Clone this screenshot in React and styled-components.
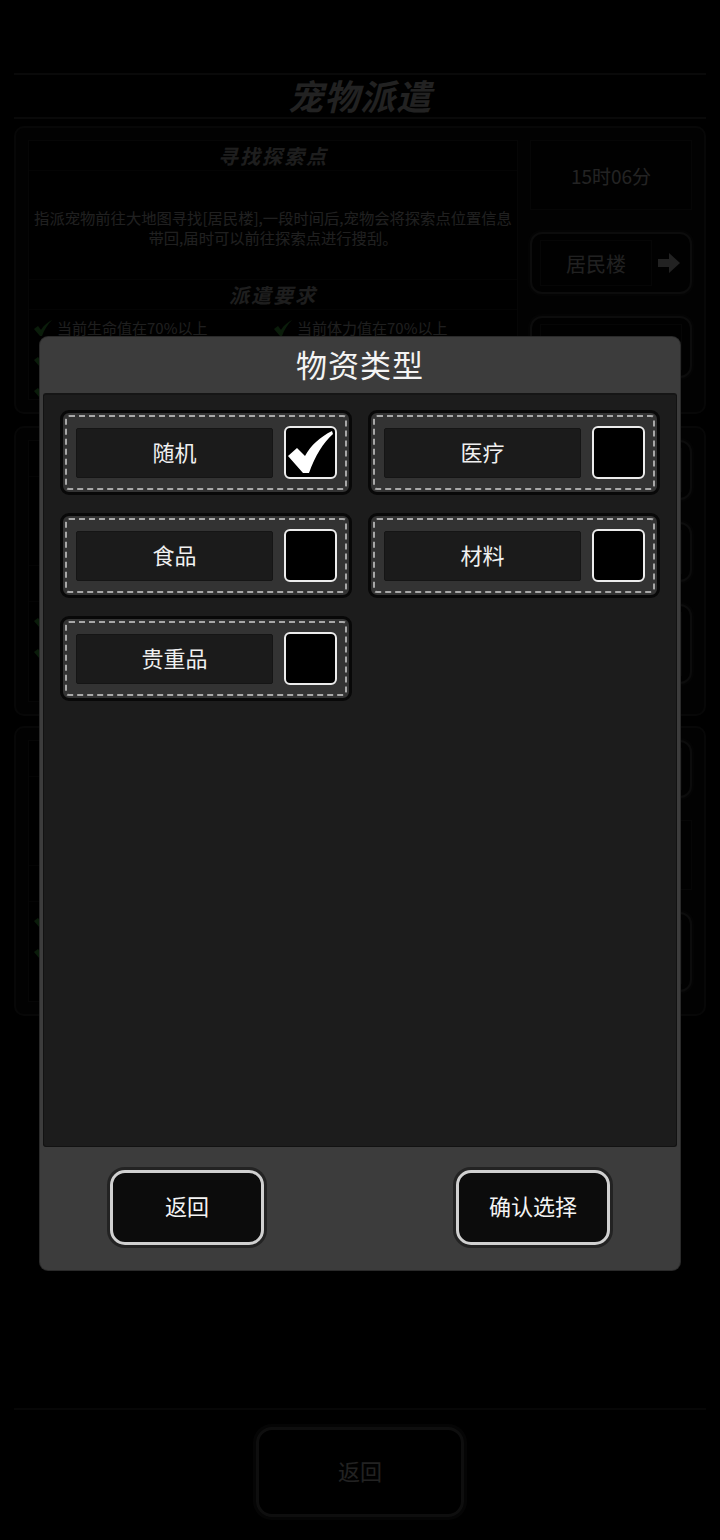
import React, { useState } from 'react';
import styled, { createGlobalStyle } from 'styled-components';

const GlobalStyle = createGlobalStyle`
    html, body {
        margin: 0;
        padding: 0;
        background: #000;
    }
    body {
        font-family: "Noto Sans CJK SC", "Noto Sans", sans-serif;
    }
    * { box-sizing: border-box; }
`;

const Screen = styled.div`
    position: relative;
    width: 720px;
    height: 1540px;
    overflow: hidden;
    background: #000;
`;

/* ---------- page behind the dialog ---------- */

const Page = styled.div`
    height: 100%;
    display: flex;
    flex-direction: column;
    padding-top: 73px;
`;

const TitleBar = styled.div`
    margin: 0 14px;
    height: 46px;
    border-top: 2px solid #3a3a3a;
    border-bottom: 2px solid #3a3a3a;
    display: flex;
    align-items: center;
    justify-content: center;
    padding-bottom: 3px;
    font-size: 35px;
    font-weight: 700;
    font-style: italic;
    color: #d0d0d0;
    letter-spacing: 1px;
`;

const Panel = styled.div`
    margin: ${p => p.$top}px 14px 0;
    height: ${p => p.$h}px;
    border: 2px solid #2c2c2c;
    border-radius: 10px;
    background: #0d0d0d;
    padding: 12px;
    display: flex;
    gap: 12px;
`;

const LeftBox = styled.div`
    flex: 1;
    border: 1px solid #262626;
    background: #050505;
    display: flex;
    flex-direction: column;
`;

const SectionHead = styled.div`
    height: 36px;
    display: flex;
    align-items: center;
    justify-content: center;
    font-size: 20px;
    font-weight: 700;
    font-style: italic;
    letter-spacing: 2px;
    color: #b8b8b8;
    border-bottom: 1px solid #1e1e1e;
`;

const Desc = styled.div`
    padding: 36px 2px 32px;
    font-size: 15.3px;
    line-height: 20px;
    text-align: center;
    color: #c4c4c4;
    border-bottom: 1px solid #1e1e1e;
`;

const ReqGrid = styled.div`
    display: grid;
    grid-template-columns: 1fr 1fr;
    grid-auto-rows: 31px;
    padding: 2px 4px;
`;

const Req = styled.div`
    display: flex;
    align-items: center;
    gap: 4px;
    font-size: 15px;
    color: #bdbdbd;
`;

const RightCol = styled.div`
    width: 162px;
    display: flex;
    flex-direction: column;
    gap: 22px;
`;

const TimeBox = styled.div`
    height: 70px;
    border: 1px solid #262626;
    background: #080808;
    display: flex;
    align-items: center;
    justify-content: center;
    font-size: 19px;
    color: #d8d8d8;
`;

const SideButton = styled.div`
    height: ${p => p.$h || 62}px;
    border: 2px solid #4a4a4a;
    border-radius: 12px;
    box-shadow: 0 0 0 2px #1a1a1a;
    background: #0a0a0a;
    display: flex;
    align-items: center;
    padding: 6px 8px;
    gap: 4px;
`;

const SideLabel = styled.div`
    flex: 1;
    height: 100%;
    border: 1px solid #2a2a2a;
    display: flex;
    align-items: center;
    justify-content: center;
    font-size: 20px;
    color: #cfcfcf;
`;

const BottomBar = styled.div`
    margin: auto 14px 0;
    height: 132px;
    border-top: 2px solid #2e2e2e;
    display: flex;
    justify-content: center;
    padding-top: 17px;
`;

const BigButton = styled.div`
    width: 208px;
    height: 90px;
    border: 3px solid #5a5a5a;
    border-radius: 16px;
    box-shadow: 0 0 0 3px #222;
    display: flex;
    align-items: center;
    justify-content: center;
    padding-bottom: 4px;
    font-size: 22px;
    color: #d0d0d0;
`;

/* ---------- dialog ---------- */

const Overlay = styled.div`
    position: absolute;
    inset: 0;
    background: rgba(0, 0, 0, 0.84);
    display: flex;
    flex-direction: column;
    align-items: center;
    padding-top: 337px;
`;

const Dialog = styled.div`
    width: 640px;
    height: 933px;
    background: #3c3c3c;
    border-radius: 8px;
    display: flex;
    flex-direction: column;
    box-shadow: 0 0 0 1px #2a2a2a;
`;

const DialogHead = styled.div`
    height: 56px;
    display: flex;
    align-items: center;
    justify-content: center;
    padding-bottom: 3px;
    font-size: 31px;
    color: #f4f4f4;
    letter-spacing: 1px;
`;

const DialogBody = styled.div`
    flex: 1;
    margin: 0 3px;
    background: #1c1c1c;
    border: 1px solid #121212;
    border-top: 2px solid #151515;
    border-radius: 3px;
    padding: 15px 16px;
    display: grid;
    grid-template-columns: 292px 292px;
    grid-auto-rows: 85px;
    column-gap: 16px;
    row-gap: 18px;
    align-content: start;
`;

const Option = styled.div`
    border: 3px solid #080808;
    border-radius: 9px;
    background: #333333;
    outline: 2px dashed #a8a8a8;
    outline-offset: -7px;
    display: flex;
    align-items: center;
    padding: 0 12px 0 13px;
    gap: 11px;
    cursor: pointer;
`;

const OptionLabel = styled.div`
    width: 197px;
    height: 50px;
    background: #1b1b1b;
    border: 1px solid #151515;
    border-radius: 2px;
    display: flex;
    align-items: center;
    justify-content: center;
    padding-bottom: 4px;
    font-size: 22px;
    color: #f0f0f0;
`;

const CheckBox = styled.div`
    width: 53px;
    height: 53px;
    background: #000;
    border: 2px solid #ececec;
    border-radius: 6px;
    display: flex;
    align-items: center;
    justify-content: center;
`;

const DialogFoot = styled.div`
    height: 123px;
    display: flex;
    align-items: center;
    justify-content: space-between;
    padding: 0 70px 2px;
`;

const FootButton = styled.button`
    width: 154px;
    height: 75px;
    border: 3px solid #d0d0d0;
    border-radius: 15px;
    box-shadow: 0 0 0 3px #232323;
    background: #0c0c0c;
    color: #f4f4f4;
    font-family: inherit;
    font-size: 22px;
    padding: 0 0 5px;
    cursor: pointer;
`;

const CheckMark = () => (
    <svg width="49" height="49" viewBox="0 0 49 49">
        <path
            d="M2 28 L11 20 L19 28 C25 17 34 9 46 3 L47 6 C37 15 29 28 23 45 L17 45 Z"
            fill="#fff"
        />
    </svg>
);

const GreenTick = () => (
    <svg width="20" height="18" viewBox="0 0 20 18">
        <path d="M1 10 L5 7 L8 11 C11 6 15 3 19 1 C15 5 11 11 9 17 L7 17 Z" fill="#3fae3f" />
    </svg>
);

const Arrow = () => (
    <svg width="26" height="26" viewBox="0 0 26 26">
        <path d="M2 9 H13 V3 L24 13 L13 23 V17 H2 Z" fill="#d0d0d0" />
    </svg>
);

const panels = [
    {
        top: 7, h: 288,
        title: '寻找探索点',
        desc: '指派宠物前往大地图寻找[居民楼],一段时间后,宠物会将探索点位置信息带回,届时可以前往探索点进行搜刮。',
        reqs: ['当前生命值在70%以上', '当前体力值在70%以上', '当前饱食度在50%以上', '当前心情值在50%以上', '宠物等级达到5级', ''],
        side: 'time',
    },
    {
        top: 12, h: 290,
        title: '寻找物资',
        desc: '指派宠物外出寻找物资,一段时间后,宠物会将找到的物资带回。',
        reqs: ['当前生命值在70%以上', '当前体力值在70%以上', '当前饱食度在50%以上', '当前心情值在50%以上'],
        side: 'buttons',
    },
    {
        top: 10, h: 290,
        title: '寻找幸存者',
        desc: '指派宠物外出寻找幸存者,一段时间后,宠物会将幸存者的消息带回。',
        reqs: ['当前生命值在70%以上', '当前体力值在70%以上', '当前饱食度在50%以上', '当前心情值在50%以上'],
        side: 'buttons2',
    },
];

const options = ['随机', '医疗', '食品', '材料', '贵重品'];

const App = () => {
    const [selected, setSelected] = useState('随机');

    return (
        <Screen>
            <GlobalStyle />
            <Page>
                <TitleBar>宠物派遣</TitleBar>
                {panels.map(p => (
                    <Panel key={p.title} $top={p.top} $h={p.h}>
                        <LeftBox>
                            <SectionHead>{p.title}</SectionHead>
                            <Desc>{p.desc}</Desc>
                            <SectionHead>派遣要求</SectionHead>
                            <ReqGrid>
                                {p.reqs.map((r, i) => (
                                    <Req key={i}>{r && <GreenTick />}{r}</Req>
                                ))}
                            </ReqGrid>
                        </LeftBox>
                        <RightCol>
                            {p.side === 'time' && (
                                <>
                                    <TimeBox>15时06分</TimeBox>
                                    <SideButton><SideLabel>居民楼</SideLabel><Arrow /></SideButton>
                                    <SideButton><SideLabel>选择宠物</SideLabel></SideButton>
                                </>
                            )}
                            {p.side === 'buttons' && (
                                <>
                                    <SideButton $h={60}><SideLabel>物资类型</SideLabel></SideButton>
                                    <SideButton $h={60}><SideLabel>选择宠物</SideLabel></SideButton>
                                    <SideButton $h={80}><SideLabel>派遣</SideLabel></SideButton>
                                </>
                            )}
                            {p.side === 'buttons2' && (
                                <>
                                    <SideButton $h={58}><SideLabel>选择宠物</SideLabel></SideButton>
                                    <TimeBox>--</TimeBox>
                                    <SideButton $h={80}><SideLabel>派遣</SideLabel></SideButton>
                                </>
                            )}
                        </RightCol>
                    </Panel>
                ))}
                <BottomBar>
                    <BigButton>返回</BigButton>
                </BottomBar>
            </Page>

            <Overlay>
                <Dialog>
                    <DialogHead>物资类型</DialogHead>
                    <DialogBody>
                        {options.map(o => (
                            <Option key={o} onClick={() => setSelected(o)}>
                                <OptionLabel>{o}</OptionLabel>
                                <CheckBox>{selected === o && <CheckMark />}</CheckBox>
                            </Option>
                        ))}
                    </DialogBody>
                    <DialogFoot>
                        <FootButton>返回</FootButton>
                        <FootButton>确认选择</FootButton>
                    </DialogFoot>
                </Dialog>
            </Overlay>
        </Screen>
    );
};

export default App;
